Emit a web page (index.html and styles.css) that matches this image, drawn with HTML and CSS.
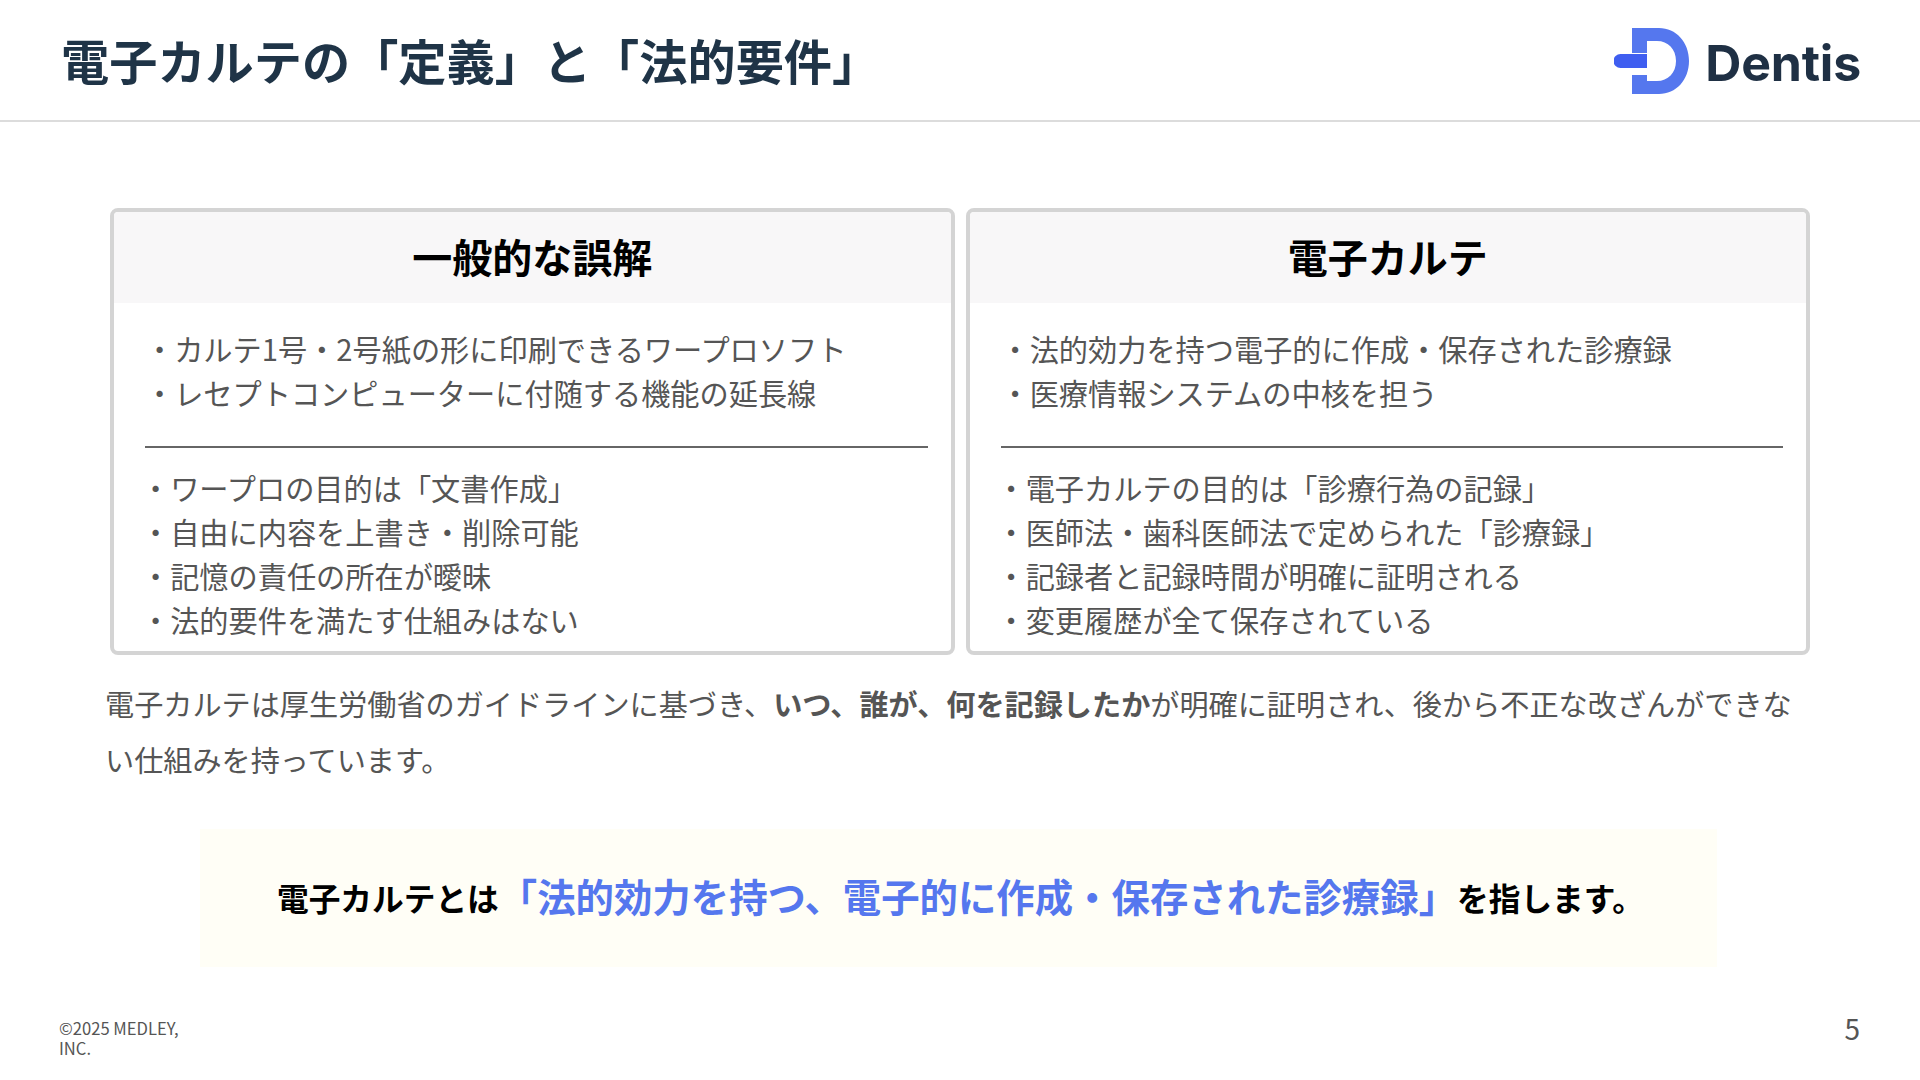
FILE: index.html
```html
<!DOCTYPE html>
<html lang="ja">
<head>
<meta charset="utf-8">
<title>電子カルテの「定義」と「法的要件」</title>
<link rel="stylesheet" href="styles.css">
</head>
<body>
<div class="slide">
  <header class="header">
    <h1 class="title">電子カルテの「定義」と「法的要件」</h1>
    <div class="logo">
      <svg class="logo-mark" viewBox="0 0 75 66" width="75" height="66" aria-hidden="true">
        <path fill="#5577ee" d="M18 0H45C62 0 75 14 75 33C75 52 62 66 45 66H18V47H33V53H43C54 53 62 45 62 33C62 21 54 13 43 13H33V25H18Z"/>
        <path fill="#3f5ef0" d="M33 26H6.500A7 7 0 0 0 6.500 40H33Z"/>
      </svg>
      <span class="logo-text">Dentis</span>
    </div>
  </header>
  <main class="main">
    <section class="cards">
      <article class="card">
        <h2 class="card-head">一般的な誤解</h2>
        <ul class="list list-top">
          <li>・カルテ1号・2号紙の形に印刷できるワープロソフト</li>
          <li>・レセプトコンピューターに付随する機能の延長線</li>
        </ul>
        <hr class="rule">
        <ul class="list list-bottom">
          <li>・ワープロの目的は「文書作成」</li>
          <li>・自由に内容を上書き・削除可能</li>
          <li>・記憶の責任の所在が曖昧</li>
          <li>・法的要件を満たす仕組みはない</li>
        </ul>
      </article>
      <article class="card">
        <h2 class="card-head">電子カルテ</h2>
        <ul class="list list-top">
          <li>・法的効力を持つ電子的に作成・保存された診療録</li>
          <li>・医療情報システムの中核を担う</li>
        </ul>
        <hr class="rule">
        <ul class="list list-bottom">
          <li>・電子カルテの目的は「診療行為の記録」</li>
          <li>・医師法・歯科医師法で定められた「診療録」</li>
          <li>・記録者と記録時間が明確に証明される</li>
          <li>・変更履歴が全て保存されている</li>
        </ul>
      </article>
    </section>
    <p class="lead"><span class="lead-line">電子カルテは厚生労働省のガイドラインに基づき、<strong>いつ、誰が、何を記録したか</strong>が明確に証明され、後から不正な改ざんができな</span><span class="lead-line">い仕組みを持っています。</span></p>
    <div class="callout">
      <span class="callout-text">電子カルテとは</span><span class="callout-em">「法的効力を持つ、電子的に作成・保存された診療録」</span><span class="callout-text">を指します。</span>
    </div>
  </main>
  <footer class="footer">
    <div class="copyright">©2025 MEDLEY, INC.</div>
    <div class="page-num">5</div>
  </footer>
</div>
</body>
</html>
```

FILE: styles.css
```css
* { box-sizing: border-box; }
html, body { margin: 0; padding: 0; background: #fff; }
body { font-family: "Noto Sans CJK JP", "Noto Sans", sans-serif; }
.slide { width: 1920px; height: 1080px; overflow: hidden; display: flex; flex-direction: column; background: #fff; }

.header { height: 122px; flex: none; display: flex; align-items: center; justify-content: space-between; padding: 0 60px 0 61px; border-bottom: 2px solid #dcdcdc; }
.title { margin: -2px 0 0; font-size: 48.2px; font-weight: 700; line-height: 1.3; color: #1f3447; }
.logo { display: flex; align-items: center; gap: 16px; padding-top: 2px; margin-right: -1px; }
.logo-mark { display: block; flex: none; }
.logo-text { font-family: Inter, "Noto Sans", sans-serif; font-size: 50px; font-weight: 700; line-height: 1; letter-spacing: -0.2px; color: #1f3044; padding-top: 3px; }

.main { flex: none; padding: 86px 0 0 110px; }
.cards { display: flex; gap: 11px; }
.card { width: 844.5px; height: 447px; border: 4px solid #d4d4d4; border-radius: 8px; overflow: hidden; background: #fff; flex: none; }
.card-head { margin: 0; height: 91px; padding-bottom: 4px; display: flex; align-items: center; justify-content: center; background: #f8f7f8; color: #000; font-size: 40px; font-weight: 700; line-height: 1; }
.list { list-style: none; margin: 0; font-size: 29.2px; line-height: 44px; color: #555; }
.list-top { padding: 23px 0 0 31px; }
.list-bottom { padding: 0 0 0 27px; margin-top: 17px; }
.rule { height: 0; border: 0; border-top: 2px solid #666; margin: 32px 23px 0 31px; }

.lead { margin: 20px 0 0 -5px; width: 1700px; font-size: 29.15px; line-height: 56px; color: #555; }
.lead-line { display: block; white-space: nowrap; }
.lead strong { font-weight: 700; }

.callout { margin: 42px 0 0 90px; width: 1517px; height: 138px; padding: 0 0 3px 4px; display: flex; align-items: center; justify-content: center; background: #fffef6; }
.callout-text { font-size: 31.7px; font-weight: 700; color: #000; }
.callout-em { font-size: 38.4px; font-weight: 700; color: #5577ee; margin-top: -3px; }

.footer { flex: none; display: flex; justify-content: space-between; align-items: flex-start; padding: 51px 60px 0 59px; }
.copyright { width: 140px; font-size: 16.6px; line-height: 20px; color: #555; }
.page-num { font-size: 28px; line-height: 36px; margin-top: -8px; color: #555; }
```
